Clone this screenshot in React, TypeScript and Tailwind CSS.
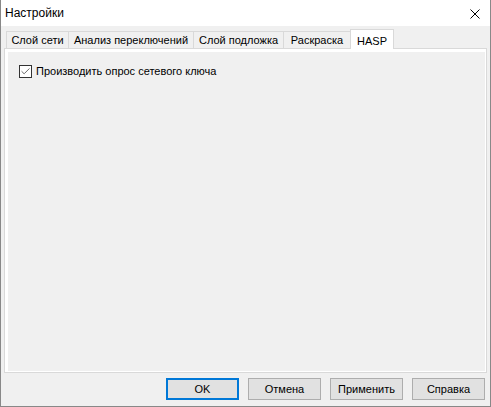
import { Check } from 'lucide-react'

const tabs = [
  { label: 'Слой сети', w: 'w-[62px]' },
  { label: 'Анализ переключений', w: 'w-[125px]' },
  { label: 'Слой подложка', w: 'w-[90px]' },
  { label: 'Раскраска', w: 'w-[67px]' },
]

const buttons = ['OK', 'Отмена', 'Применить', 'Справка']

export default function App() {
  return (
    <div
      className="w-[491px] h-[407px] bg-[#f0f0f0] border-x border-b border-[#888888] flex flex-col text-[11px] text-black"
      style={{ fontFamily: '"Liberation Sans", Arial, sans-serif' }}
    >
      {/* title bar */}
      <div className="h-[26px] bg-white flex items-center justify-between pl-[4px] pr-[10px] shrink-0">
        <span className="leading-none text-[12px]">Настройки</span>
        <svg width="10" height="10" viewBox="0 0 10 10" className="mt-[1px]">
          <path d="M0.5 0.5 L9.5 9.5 M9.5 0.5 L0.5 9.5" stroke="#000" strokeWidth="1" fill="none" />
        </svg>
      </div>

      <div className="flex flex-col px-[3px] pt-[3px]">
        {/* tab strip */}
        <div className="flex items-end h-[19px] pl-[2px] relative z-10">
          {tabs.map((t) => (
            <div
              key={t.label}
              className={`${t.w} h-[17px] flex items-center justify-center pt-[1px] border-t border-l border-[#d9d9d9] bg-[#f0f0f0] whitespace-nowrap`}
            >
              {t.label}
            </div>
          ))}
          <div className="w-[44px] h-[20px] -mb-[1px] flex items-start justify-center pt-[3px] bg-white border-x border-t border-[#d9d9d9]">
            HASP
          </div>
        </div>

        {/* panel */}
        <div className="h-[325px] border border-[#d9d9d9] bg-white flex pl-[3px] pt-[3px] pr-[1px] pb-[1px]">
          <div className="flex-1 bg-[#f0f0f0] pl-[11px] pt-[13px]">
            <label className="flex items-start gap-[4px]">
              <span className="w-[13px] h-[13px] border border-[#333333] bg-white flex items-center justify-center shrink-0">
                <Check size={11} strokeWidth={1.6} color="#333333" />
              </span>
              <span className="leading-[12px]">Производить опрос сетевого ключа</span>
            </label>
          </div>
        </div>

        {/* buttons */}
        <div className="flex justify-end gap-[9px] pr-[2px] mt-[5px]">
          {buttons.map((b, i) => (
            <div
              key={b}
              className={`w-[73px] h-[22px] flex items-center justify-center bg-[#e1e1e1] ${
                i === 0 ? 'border-2 border-[#0078d7]' : 'border border-[#adadad]'
              }`}
            >
              {b}
            </div>
          ))}
        </div>
      </div>
    </div>
  )
}
